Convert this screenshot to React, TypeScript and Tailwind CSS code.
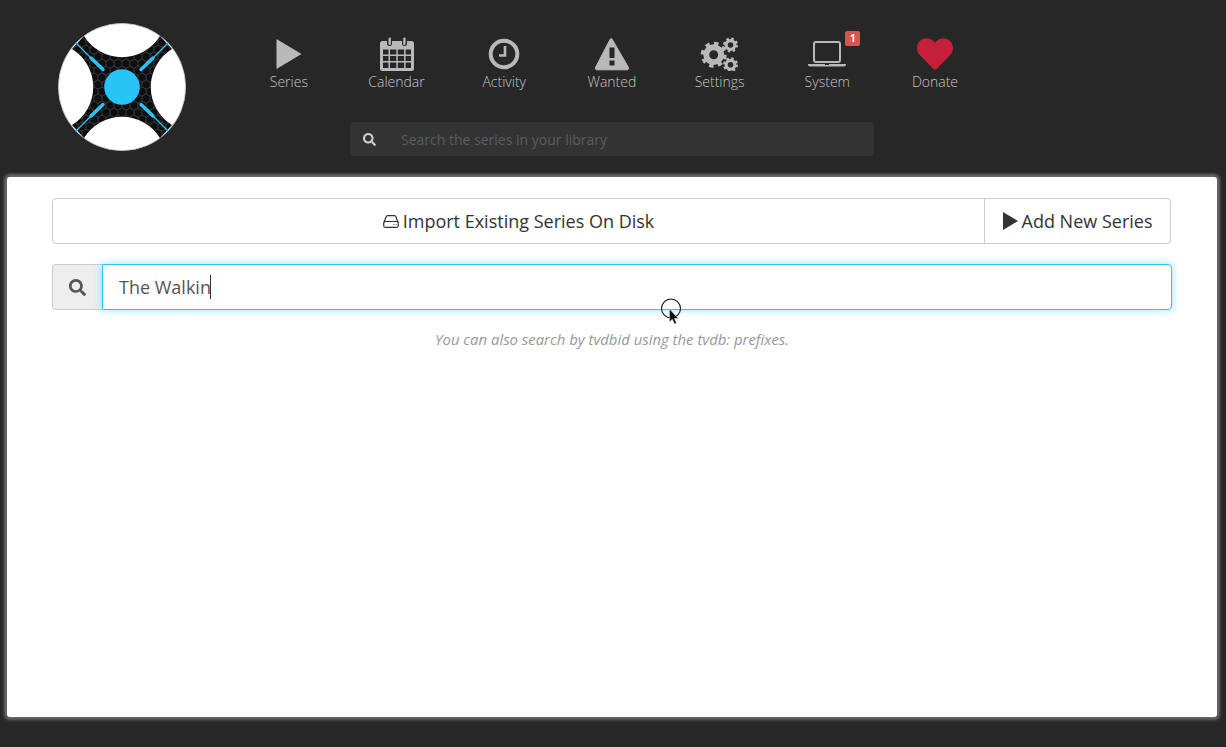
import { FaHeart, FaSearch } from "react-icons/fa";

const LOGO_ARMS =
  "M-38-51A44.6 44.6 0 0 0 38-51L50-38A44.6 44.6 0 0 0 50 38L38 51A44.6 44.6 0 0 0-38 51L-50 38A44.6 44.6 0 0 0-50-38Z";

function Logo() {
  return (
    <svg width="128" height="128" viewBox="-64 -64 128 128" className="shrink-0">
      <defs>
        <pattern id="hex" width="8" height="14" patternUnits="userSpaceOnUse">
          <path d="M4 0 8 2.300v4.700L4 9.300 0 7V2.300ZM4 9.300V14M0 7v0" fill="none" stroke="#55555a" strokeWidth="0.6" />
        </pattern>
      </defs>
      <circle r="63.6" fill="#fff" stroke="#c8c8c8" strokeWidth="0.8" />
      <path d={LOGO_ARMS} fill="#0e0e10" />
      <path d={LOGO_ARMS} fill="url(#hex)" />
      <circle r="17.8" fill="#27c4f5" />
      <g stroke="#27c4f5" strokeLinecap="round">
        <path d="M-46-44-30-28M46-44 30-28M-46 44-30 28M46 44 30 28" strokeWidth="1.300" />
        <path d="M-31-29-19-17.500M31-29 19-17.500M-31 29-19 17.500M31 29 19 17.500" strokeWidth="3.400" />
      </g>
    </svg>
  );
}

function PlayIcon({ w, h, color }: { w: number; h: number; color: string }) {
  return (
    <svg width={w} height={h} viewBox="0 0 10 12" fill={color}>
      <path d="M0 0 10 6 0 12Z" />
    </svg>
  );
}

function CalendarIcon() {
  return (
    <svg width="34" height="34" viewBox="0 0 34 34" fill="#b9b9b9">
      <path
        fillRule="evenodd"
        d="M2.500 4H7v2.500a2.500 2.500 0 0 0 5 0V4h10v2.500a2.500 2.500 0 0 0 5 0V4h4.500A2.500 2.500 0 0 1 34 6.500v25a2.500 2.500 0 0 1-2.500 2.500h-29A2.500 2.500 0 0 1 0 31.500v-25A2.500 2.500 0 0 1 2.500 4ZM3 12.500v5h5.500v-5Zm7 0v5h6.300v-5Zm7.800 0v5h6.300v-5Zm7.800 0v5H31v-5ZM3 19v5h5.500v-5Zm7 0v5h6.300v-5Zm7.800 0v5h6.300v-5Zm7.800 0v5H31v-5ZM3 25.500V31h5.500v-5.500Zm7 0V31h6.300v-5.500Zm7.800 0V31h6.300v-5.500Zm7.800 0V31H31v-5.500Z"
      />
      <rect x="8.500" y="0.500" width="2.400" height="7.500" rx="1.200" />
      <rect x="23.200" y="0.500" width="2.400" height="7.500" rx="1.200" />
    </svg>
  );
}

function ClockIcon() {
  return (
    <svg width="32" height="32" viewBox="0 0 32 32" fill="none" stroke="#b9b9b9">
      <circle cx="16" cy="16" r="13.300" strokeWidth="4" />
      <path d="M17 8v9.500h-6" strokeWidth="2.600" />
    </svg>
  );
}

function WarningIcon() {
  return (
    <svg width="36" height="34" viewBox="0 0 36 34">
      <path
        d="M18 2 34.500 30.500a1.500 1.500 0 0 1-1.300 2.300H2.800a1.500 1.500 0 0 1-1.300-2.300L16 2.500a1.200 1.200 0 0 1 2-.5Z"
        fill="#b9b9b9"
        stroke="#b9b9b9"
      />
      <rect x="15.500" y="10.500" width="5" height="10.500" fill="#272727" />
      <rect x="15.500" y="23.500" width="5" height="5" fill="#272727" />
    </svg>
  );
}

// one toothed wheel, hole left open by a stroked ring
function Gear({ x, y, r, teeth, hole }: { x: number; y: number; r: number; teeth: number; hole: number }) {
  const c = 2 * Math.PI * r;
  return (
    <g fill="none" stroke="#b9b9b9">
      <circle cx={x} cy={y} r={(r + hole) / 2} strokeWidth={r - hole} />
      <circle
        cx={x}
        cy={y}
        r={r}
        strokeWidth={r * 0.5}
        strokeDasharray={`${c / teeth / 2} ${c / teeth / 2}`}
      />
    </g>
  );
}

function SettingsIcon() {
  return (
    <svg width="40" height="34" viewBox="0 0 40 34">
      <Gear x={13.700} y={17.700} r={10.400} teeth={8} hole={4.500} />
      <Gear x={30.500} y={8} r={6} teeth={8} hole={2.800} />
      <Gear x={30.500} y={27.700} r={6} teeth={8} hole={2.800} />
    </svg>
  );
}

function LaptopIcon() {
  return (
    <svg width="38" height="26" viewBox="0 0 38 26" fill="none">
      <rect x="6" y="1" width="26" height="20" rx="2" stroke="#b9b9b9" strokeWidth="2" />
      <path d="M0 23h38v.5a2 2 0 0 1-2 2H2a2 2 0 0 1-2-2Z" fill="#b9b9b9" />
      <rect x="17" y="23" width="4" height="1" fill="#272727" />
    </svg>
  );
}

function DiskIcon() {
  return (
    <svg width="16" height="13" viewBox="0 0 16 13" fill="none" stroke="#333333" strokeWidth="1.200">
      <path d="M1 7.500 3 2A1.800 1.800 0 0 1 4.700.7h6.600A1.800 1.800 0 0 1 13 2l2 5.500" />
      <rect x="0.700" y="6.500" width="14.600" height="5.800" rx="1.500" />
      <path d="M10.500 9.500h.8M12.800 9.500h.8" strokeWidth="1.200" />
    </svg>
  );
}

function PageCursor() {
  return (
    <svg width="24" height="30" viewBox="0 0 24 30" className="absolute left-[652px] top-[121px]">
      <circle cx="12" cy="10.500" r="9.500" fill="none" stroke="#111" strokeWidth="1.100" />
      <path d="M10.500 11v13l2.800-2.700 2.200 4.700 2-1-2.100-4.500h3.800Z" fill="#111" stroke="#ddd" strokeWidth="0.500" />
    </svg>
  );
}

const navItems = [
  { label: "Series", icon: <PlayIcon w={28} h={30} color="#b9b9b9" /> },
  { label: "Calendar", icon: <CalendarIcon /> },
  { label: "Activity", icon: <ClockIcon /> },
  { label: "Wanted", icon: <WarningIcon /> },
  { label: "Settings", icon: <SettingsIcon /> },
  { label: "System", icon: <LaptopIcon />, badge: "1" },
  { label: "Donate", icon: <FaHeart size={36} color="#c4203a" /> },
];

export default function App() {
  return (
    <div className="min-h-[747px] bg-[#272727] font-['Open_Sans',sans-serif] overflow-hidden">
      {/* Header */}
      <div className="flex h-[177px] pl-[58px] pt-[23px]">
        <Logo />
        <div className="ml-[49px] w-[754px] -mt-[23px] pt-[36px]">
          <div className="flex">
            {navItems.map((item) => (
              <div key={item.label} className="relative w-[107.7px] flex flex-col items-center text-[#c4c4c4]">
                <div className="h-[36px] flex items-center justify-center">{item.icon}</div>
                <span className="text-sm font-light leading-[19px]">{item.label}</span>
                {item.badge && (
                  <span className="absolute left-[72px] -top-[5px] w-[15px] h-[15px] rounded-[2px] bg-[#d9534f] text-white text-[10px] leading-[15px] font-bold text-center">
                    {item.badge}
                  </span>
                )}
              </div>
            ))}
          </div>
          <div className="mx-auto mt-[31px] w-[524px] h-[34px] rounded bg-[#333333] flex items-center">
            <FaSearch size={13} color="#cfcfcf" className="ml-[13px]" />
            <span className="ml-[25px] text-sm text-[#5c5c5c] translate-y-px">Search the series in your library</span>
          </div>
        </div>
      </div>

      {/* Page */}
      <div className="relative ml-[7px] mr-[9px] h-[540px] rounded-[3px] bg-white px-[45px] pt-[21px] shadow-[0_0_3px_3px_rgba(255,255,255,0.3)]">
        <div className="flex h-[46px] w-[1119px] rounded border border-[#cccccc] text-lg text-[#333333]">
          <div className="flex-1 flex items-center justify-center gap-[4px]">
            <DiskIcon />
            <span>Import Existing Series On Disk</span>
          </div>
          <div className="w-[186px] border-l border-[#cccccc] flex items-center justify-center gap-[4px]">
            <PlayIcon w={15} h={18} color="#333333" />
            <span>Add New Series</span>
          </div>
        </div>

        <div className="flex h-[46px] mt-[20px] w-[1120px]">
          <div className="w-[50px] flex items-center justify-center rounded-l border border-r-0 border-[#cccccc] bg-[#eeeeee]">
            <FaSearch size={17} color="#555555" />
          </div>
          <div className="flex-1 flex items-center pl-[16px] border border-[#2bc3f5] rounded-r bg-white text-lg text-[#555555] shadow-[0_0_8px_rgba(102,217,255,0.7)]">
            <span>The Walkin</span>
            <span className="w-px h-[24px] -ml-px bg-[#333333]" />
          </div>
        </div>

        <p className="mt-[19px] text-center text-[14.9px] italic text-[#999999] leading-[20px]">
          You can also search by tvdbid using the tvdb: prefixes.
        </p>

        <PageCursor />
      </div>
    </div>
  );
}
